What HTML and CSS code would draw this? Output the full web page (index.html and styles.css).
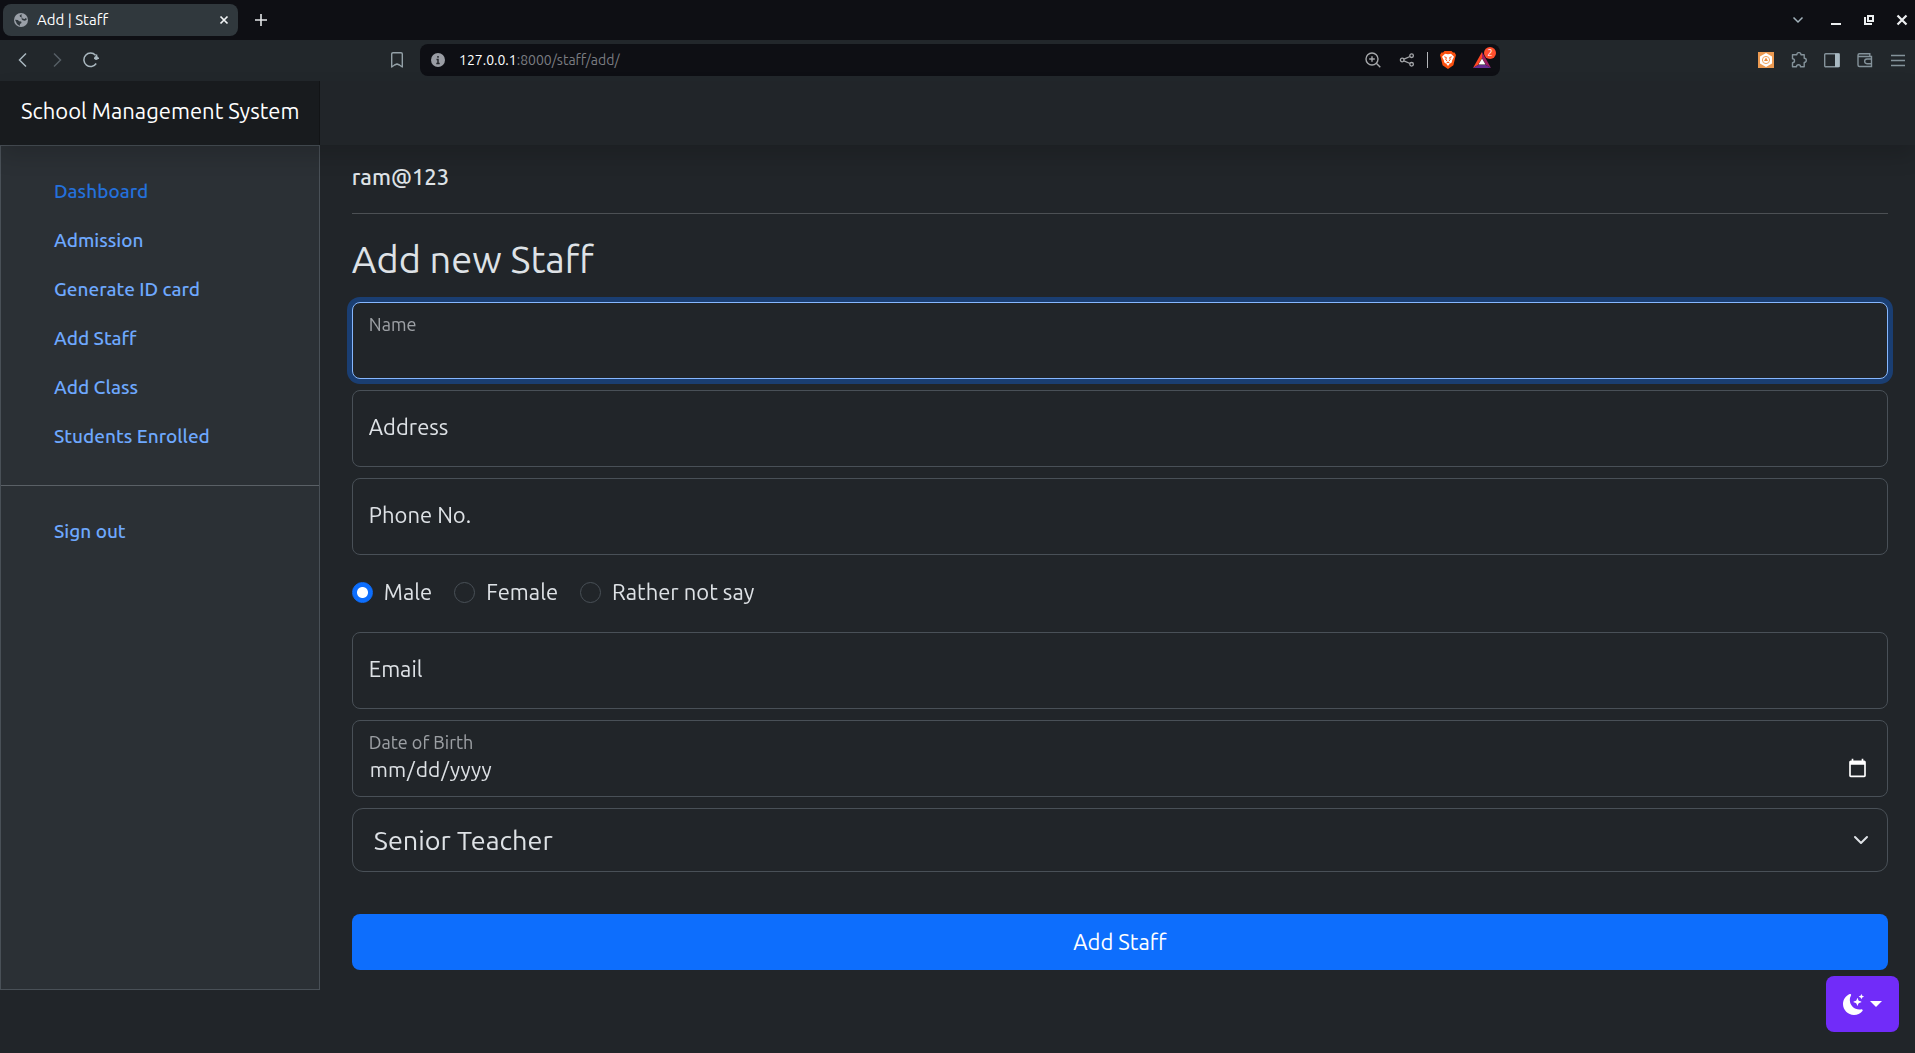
FILE: index.html
```html
<!DOCTYPE html>
<html lang="en">
<head>
<meta charset="utf-8">
<meta name="viewport" content="width=device-width, initial-scale=1">
<title>Add | Staff</title>
<link rel="stylesheet" href="styles.css">
</head>
<body>
<div class="browser">
  <div class="tab-strip">
    <div class="tab">
      <svg class="tab-icon" width="14" height="14" viewBox="0 0 14 14" aria-hidden="true"><circle cx="7" cy="7" r="7" fill="#9aa0a8"/><path d="M7.500 1 5.500 2.800l.8 1.300 1.800.2.300 1.300 2.300.3 1.300-1.200.8 1.800-1.800 1.300-2.300-.5-1-1zM1 6.800l2.800.2 1.400 1.200 2 .2.300 1.600-1.500 1-.3 2L3 11z" fill="#30383d"/></svg>
      <span class="tab-title">Add | Staff</span>
      <button class="icon-button tab-close" type="button" aria-label="Close tab"><svg width="10" height="10" viewBox="0 0 10 10"><path d="m1.500 1.500 7 7m0-7-7 7" stroke="#f1f3f5" stroke-width="1.700"/></svg></button>
    </div>
    <button class="icon-button" type="button" aria-label="New tab"><svg width="14" height="14" viewBox="0 0 14 14"><path d="M7 1v12M1 7h12" stroke="#e4e6e8" stroke-width="1.600"/></svg></button>
    <div class="window-controls">
      <button class="icon-button" type="button" aria-label="Search tabs"><svg width="12" height="12" viewBox="0 0 12 12"><path d="m1.500 3.500 4.500 4.500 4.500-4.500" fill="none" stroke="#a3b3bc" stroke-width="1.500"/></svg></button>
      <button class="icon-button" type="button" aria-label="Minimize"><svg width="12" height="12" viewBox="0 0 12 12"><path d="M1 10h10" stroke="#eceff1" stroke-width="2"/></svg></button>
      <button class="icon-button" type="button" aria-label="Restore"><svg width="12" height="12" viewBox="0 0 12 12"><path d="M5 2h5v5H5zM2 3v7h7" fill="none" stroke="#eceff1" stroke-width="2"/></svg></button>
      <button class="icon-button" type="button" aria-label="Close window"><svg width="12" height="12" viewBox="0 0 12 12"><path d="m1.500 1.500 9 9m0-9-9 9" stroke="#eceff1" stroke-width="2.200"/></svg></button>
    </div>
  </div>
  <div class="toolbar">
    <div class="toolbar-nav">
      <button class="icon-button" type="button" aria-label="Back"><svg width="16" height="16" viewBox="0 0 16 16"><path d="m11 1.500-6.500 6.500 6.500 6.500" fill="none" stroke="#a9b7bf" stroke-width="1.500"/></svg></button>
      <button class="icon-button" type="button" aria-label="Forward"><svg width="16" height="16" viewBox="0 0 16 16"><path d="m5 1.500 6.500 6.500-6.500 6.500" fill="none" stroke="#555e64" stroke-width="1.500"/></svg></button>
      <button class="icon-button" type="button" aria-label="Reload"><svg width="16" height="16" viewBox="0 0 16 16"><path d="M13.200 11.500A6.700 6.700 0 1 1 12.500 3.200" fill="none" stroke="#a9b7bf" stroke-width="1.500"/><path d="M13.500 2.500v3.700M11 6.200h5" stroke="#a9b7bf" stroke-width="1.600"/><circle cx="13.200" cy="6" r="1.900" fill="#a9b7bf"/></svg></button>
      <button class="icon-button bookmark" type="button" aria-label="Bookmark"><svg width="16" height="16" viewBox="0 0 16 16"><path d="M2.700 2q0-1.300 1.300-1.300h8q1.300 0 1.300 1.300v13L10.500 13 8 12 5.500 13 2.700 15z" fill="none" stroke="#93a0a7" stroke-width="1.400" stroke-linejoin="round"/></svg></button>
    </div>
    <div class="address-bar">
      <svg width="14" height="14" viewBox="0 0 14 14" aria-hidden="true"><circle cx="7" cy="7" r="7" fill="#9a9da4"/><path d="M7 3v1.800M5.500 6.400H7V10.500M5.300 10.500h3.400" fill="none" stroke="#25272c" stroke-width="1.500"/></svg>
      <span class="url"><span class="url-host">127.0.0.1</span>:8000/staff/add/</span>
      <div class="address-actions">
        <button class="icon-button" type="button" aria-label="Zoom"><svg width="16" height="16" viewBox="0 0 16 16"><circle cx="7" cy="7" r="6" fill="none" stroke="#a5a7aa" stroke-width="1.400"/><path d="m11.300 11.300 4 4M7 4.200v5.600M4.200 7h5.600" stroke="#a5a7aa" stroke-width="1.400"/></svg></button>
        <button class="icon-button share" type="button" aria-label="Share"><svg width="16" height="16" viewBox="0 0 16 16"><g fill="none" stroke="#a5a7aa" stroke-width="1.300"><circle cx="3.200" cy="8" r="1.800"/><circle cx="12.600" cy="3.700" r="1.800"/><circle cx="12.600" cy="12.300" r="1.800"/><path d="m5 7.200 6-2.700M5 8.800l6 2.700"/></g></svg></button>
        <span class="divider"></span>
        <button class="icon-button" type="button" aria-label="Shields"><svg width="16" height="18" viewBox="0 0 16 18"><path d="M4.500 0h7L13 1.600l1.600-.2L16 4l-.6 2-2 8.200L8 18l-5.400-3.800L.6 6 0 4l1.400-2.600 1.600.2z" fill="#fb5110"/><path d="m5 2.800 3 .5 3-.5 3 3-1.800 3.400-.5 2.200L9.500 13 8 15l-1.500-2-2.200-1.600-.5-2.200L2 5.800z" fill="#fff"/><path d="m4.300 5.800 2 .7-.5 2.300 1.500 1.300M11.700 5.800l-2 .7.5 2.300-1.500 1.300M6.500 12l1.500-.7 1.500.7" fill="none" stroke="#fb5110" stroke-width="1"/></svg></button>
        <button class="icon-button rewards" type="button" aria-label="Rewards, 2 new"><svg width="18" height="16" viewBox="0 0 18 16"><path d="M9 0 0 16l5-3 4-7z" fill="#ff4724"/><path d="m9 0 9 16-5-3-4-7z" fill="#9e1f63"/><path d="m0 16 5-3h8l5 3z" fill="#662d91"/><path d="m9 6.500 3.500 6h-7z" fill="#fff"/></svg><span class="badge">2</span></button>
      </div>
    </div>
    <div class="toolbar-extensions">
      <button class="icon-button" type="button" aria-label="Extension"><svg width="16" height="16" viewBox="0 0 16 16"><path fill="#eb9a52" d="M0 0h16v16H0z"/><path d="m8 1 6 3.500v7L8 15l-6-3.500v-7z" fill="#fff"/><circle cx="8" cy="8" r="3.600" fill="none" stroke="#efa45f"/><path d="M8 5.500 10 9H6z" fill="#e98a3d"/></svg></button>
      <button class="icon-button" type="button" aria-label="Extensions"><svg width="16" height="16" viewBox="0 0 16 16"><path d="M2.500 2.700h3.300a2.100 2.100 0 0 1 4.200 0h3.200v3.500a2.100 2.100 0 0 1 0 4.200v4.300H9.500a2 2 0 0 0-4 0h-4v-4a2 2 0 0 0 0-4V2.700z" fill="none" stroke="#84929a" stroke-width="1.400" stroke-linejoin="round"/></svg></button>
      <button class="icon-button" type="button" aria-label="Sidebar"><svg width="16" height="16" viewBox="0 0 16 16"><rect x=".7" y="1.700" width="14.600" height="13" rx="1" fill="none" stroke="#84929a" stroke-width="1.400"/><path d="M11 1.500h4.500v13.500H11z" fill="#a9b9c2"/></svg></button>
      <button class="icon-button" type="button" aria-label="Wallet"><svg width="16" height="16" viewBox="0 0 16 16"><path d="M1 3.500V13q0 1.500 1.500 1.500h12V4.500H2.500Q1 4.500 1 3.200T2.500 1.800h10.300v2.500M14.800 7H10a2.300 2.300 0 0 0 0 4.700h4.800" fill="none" stroke="#84929a" stroke-width="1.400"/></svg></button>
      <button class="icon-button" type="button" aria-label="Menu"><svg width="16" height="16" viewBox="0 0 16 16"><path d="M1 3.500h14M1 8.500h14M1 13.500h14" stroke="#84929a" stroke-width="1.400"/></svg></button>
    </div>
  </div>
</div>

<header class="site-header">
  <a class="brand" href="#">School Management System</a>
</header>

<div class="layout">
  <nav class="sidebar" aria-label="Main">
    <ul class="nav-list">
      <li><a class="nav-link active" href="#">Dashboard</a></li>
      <li><a class="nav-link" href="#">Admission</a></li>
      <li><a class="nav-link" href="#">Generate ID card</a></li>
      <li><a class="nav-link" href="#">Add Staff</a></li>
      <li><a class="nav-link" href="#">Add Class</a></li>
      <li><a class="nav-link" href="#">Students Enrolled</a></li>
    </ul>
    <hr class="nav-rule">
    <ul class="nav-list">
      <li><a class="nav-link" href="#">Sign out</a></li>
    </ul>
  </nav>

  <main class="content">
    <p class="username">ram@123</p>
    <h1 class="title">Add new Staff</h1>
    <form class="staff-form">
      <div class="field">
        <input class="field-input" id="name" type="text" placeholder=" " autocomplete="off" autofocus>
        <label class="field-label" for="name">Name</label>
      </div>
      <div class="field">
        <input class="field-input" id="address" type="text" placeholder=" ">
        <label class="field-label" for="address">Address</label>
      </div>
      <div class="field">
        <input class="field-input" id="phone" type="text" placeholder=" ">
        <label class="field-label" for="phone">Phone No.</label>
      </div>
      <div class="radio-group" role="radiogroup" aria-label="Gender">
        <label class="radio-label"><input class="radio" type="radio" name="gender" checked>Male</label>
        <label class="radio-label"><input class="radio" type="radio" name="gender">Female</label>
        <label class="radio-label"><input class="radio" type="radio" name="gender">Rather not say</label>
      </div>
      <div class="field">
        <input class="field-input" id="email" type="email" placeholder=" ">
        <label class="field-label" for="email">Email</label>
      </div>
      <div class="field">
        <input class="field-input" id="dob" type="date">
        <label class="field-label floated" for="dob">Date of Birth</label>
      </div>
      <select class="role-select" aria-label="Position">
        <option>Senior Teacher</option>
      </select>
      <button class="submit" type="submit">Add Staff</button>
    </form>
  </main>
</div>

<button class="theme-toggle" type="button" aria-label="Toggle theme">
  <svg width="21" height="21" viewBox="0 0 16 16" fill="#fff" aria-hidden="true"><path d="M6 .278a.768.768 0 0 1 .08.858 7.208 7.208 0 0 0-.878 3.460c0 4.021 3.278 7.277 7.318 7.277.527 0 1.040-.055 1.533-.160a.787.787 0 0 1 .810.316.733.733 0 0 1-.031.893A8.349 8.349 0 0 1 8.344 16C3.734 16 0 12.286 0 7.710 0 4.266 2.114 1.312 5.124.060A.752.752 0 0 1 6 .278z"/><path d="M10.794 3.148a.217.217 0 0 1 .412 0l.387 1.162c.173.518.579.924 1.097 1.097l1.162.387a.217.217 0 0 1 0 .412l-1.162.387a1.734 1.734 0 0 0-1.097 1.097l-.387 1.162a.217.217 0 0 1-.412 0l-.387-1.162A1.734 1.734 0 0 0 9.310 6.593l-1.162-.387a.217.217 0 0 1 0-.412l1.162-.387a1.734 1.734 0 0 0 1.097-1.097l.387-1.162zM13.863.099a.145.145 0 0 1 .274 0l.258.774c.115.346.386.617.732.732l.774.258a.145.145 0 0 1 0 .274l-.774.258a1.156 1.156 0 0 0-.732.732l-.258.774a.145.145 0 0 1-.274 0l-.258-.774a1.156 1.156 0 0 0-.732-.732l-.774-.258a.145.145 0 0 1 0-.274l.774-.258c.346-.115.617-.386.732-.732L13.863.100z"/></svg>
  <span class="caret"></span>
</button>
</body>
</html>
```
FILE: styles.css
```css
* {
  box-sizing: border-box;
}

:root {
  color-scheme: dark;
  --bg: #212529;
  --text: #dee2e6;
  --border: #495057;
  --link: #6ea8fe;
  --primary: #0d6efd;
  --sidebar-width: 16.7%;
}

body {
  margin: 0;
  background: var(--bg);
  color: var(--text);
  font-family: Ubuntu, "Noto Sans", sans-serif;
  font-size: 22px;
  line-height: 32px;
}

button,
input,
select {
  margin: 0;
  font: inherit;
  color: inherit;
}

/* Browser window */
.icon-button {
  display: flex;
  padding: 0;
  border: 0;
  background: none;
}

.tab-strip {
  display: flex;
  align-items: center;
  gap: 16px;
  height: 40px;
  padding: 0 7px 0 3px;
  background: #0e0f14;
}

.tab {
  display: flex;
  align-items: center;
  gap: 9px;
  width: 235px;
  height: 32px;
  padding: 0 9px 0 11px;
  border-radius: 8px;
  background: #30383d;
  color: #fff;
  font-size: 15px;
}

.tab-close {
  margin-left: auto;
}

.window-controls {
  display: flex;
  gap: 21px;
  margin-left: auto;
}

.window-controls > :first-child {
  margin-right: 5px;
}

.toolbar {
  display: grid;
  grid-template-columns: 1fr minmax(0, 1080px) 1fr;
  align-items: center;
  height: 41px;
  padding: 0 0 2px 5px;
  background: #22272b;
}

.toolbar-nav {
  display: flex;
  gap: 18px;
  padding: 0 15px 0 10px;
}

.bookmark {
  margin-left: auto;
}

.address-bar {
  display: flex;
  align-items: center;
  gap: 14px;
  height: 32px;
  padding: 0 9px 0 11px;
  border-radius: 8px;
  background: #0e0f14;
}

.url {
  color: #7b7d82;
  font-size: 14px;
}

.url-host {
  color: #fff;
}

.address-actions {
  display: flex;
  align-items: center;
  gap: 12px;
  margin-left: auto;
}

.share {
  margin-left: 6px;
}

.divider {
  width: 1px;
  height: 16px;
  background: #b4b6b9;
}

.rewards {
  position: relative;
  margin-left: 5px;
}

.badge {
  position: absolute;
  top: -5px;
  right: -5px;
  width: 12px;
  height: 12px;
  border-radius: 50%;
  background: #ff4f2e;
  color: #fff;
  font-size: 9px;
  line-height: 12px;
  text-align: center;
}

.toolbar-extensions {
  display: flex;
  justify-content: flex-end;
  gap: 17px;
  padding: 0 9px;
}

/* Site header */
.site-header {
  position: relative;
  display: flex;
  height: 64px;
  background: var(--bg);
  box-shadow: 0 11px 21px rgba(0, 0, 0, .15);
}

.brand {
  width: var(--sidebar-width);
  min-width: 300px;
  padding: 14px 21px;
  background: rgba(0, 0, 0, .25);
  box-shadow: inset -1px 0 0 rgba(0, 0, 0, .25);
  color: #fff;
  text-decoration: none;
  white-space: nowrap;
}

/* Page layout */
.layout {
  display: flex;
}

.sidebar {
  width: var(--sidebar-width);
  min-width: 300px;
  padding-top: 21px;
  border: 1px solid var(--border);
  background: #2b3035;
}

.nav-list {
  margin: 0;
  padding: 0;
  list-style: none;
}

.nav-link {
  display: block;
  padding: 10px 53px 11px;
  color: var(--link);
  font-size: 19px;
  font-weight: 500;
  line-height: 28px;
  text-decoration: none;
}

.nav-link.active {
  color: #2470dc;
}

.nav-rule {
  height: 1px;
  margin: 24px 0 21px;
  border: 0;
  background: #5a6066;
}

.content {
  flex: 1;
  min-width: 0;
  padding: 11px 27px 20px 32px;
}

.username {
  margin: 0;
  padding: 5px 0 20px;
  border-bottom: 1px solid #4c5054;
  font-weight: 500;
}

.title {
  margin: 23px 0 21px;
  font-size: 38px;
  font-weight: 400;
  line-height: 44px;
}

.staff-form {
  display: flex;
  flex-direction: column;
  gap: 11px;
}

/* The input and its label share one grid cell */
.field {
  display: grid;
}

.field-input,
.field-label {
  grid-area: 1 / 1;
}

.field-input {
  width: 100%;
  height: 77px;
  padding: 32px 17px 12px 16px;
  border: 1px solid var(--border);
  border-radius: 8px;
  outline: 0;
  background: var(--bg);
  font-size: 21px;
}

.field-input:focus {
  border-color: #86b7fe;
  box-shadow: 0 0 0 5px rgba(13, 110, 253, .35);
  caret-color: transparent;
}

.field-label {
  padding: 21px 17px;
  pointer-events: none;
}

.field-label.floated,
.field-input:focus + .field-label,
.field-input:not(:placeholder-shown) + .field-label {
  padding-top: 6px;
  color: rgba(222, 226, 230, .65);
  font-size: 18px;
}

.radio-group {
  display: flex;
  gap: 22px;
  padding: 10px 0 13px;
}

.radio-label {
  display: flex;
  align-items: center;
  gap: 11px;
}

.radio {
  width: 21px;
  height: 21px;
  border: 1px solid var(--border);
  border-radius: 50%;
  appearance: none;
}

.radio:checked {
  border-color: var(--primary);
  background: radial-gradient(circle, #fff 5px, var(--primary) 6px);
}

.role-select {
  width: 100%;
  height: 64px;
  padding: 0 21px;
  border: 1px solid var(--border);
  border-radius: 11px;
  appearance: none;
  background: var(--bg) url("data:image/svg+xml,%3Csvg xmlns='http://www.w3.org/2000/svg' viewBox='0 0 16 16'%3E%3Cpath fill='none' stroke='%23dee2e6' stroke-linecap='round' stroke-linejoin='round' stroke-width='2' d='m2 5 6 6 6-6'/%3E%3C/svg%3E") right 18px center / 16px no-repeat;
  font-size: 27px;
}

.submit {
  height: 56px;
  margin-top: 31px;
  border: 0;
  border-radius: 8px;
  background: var(--primary);
  color: #fff;
}

/* Floats over the page in the bottom corner */
.theme-toggle {
  position: fixed;
  right: 16px;
  bottom: 21px;
  display: flex;
  align-items: center;
  gap: 6px;
  height: 56px;
  padding: 0 17px;
  border: 0;
  border-radius: 8px;
  background: #712cf9;
}

.caret {
  border: 6px solid transparent;
  border-top-color: #fff;
  border-bottom: 0;
}
```
